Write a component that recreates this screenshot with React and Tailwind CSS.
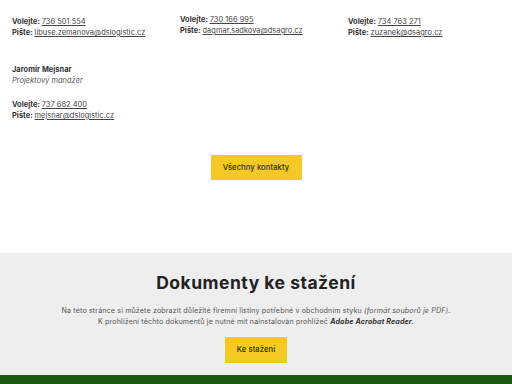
import React from "react";

const font = { fontFamily: "Inter, 'Open Sans', sans-serif" };

function Contact({ phone, email }) {
  return (
    <>
      <div>
        <span className="font-bold">Volejte: </span>
        <a className="underline text-[#444]">{phone}</a>
      </div>
      <div>
        <span className="font-bold">Pište: </span>
        <a className="underline text-[#444]">{email}</a>
      </div>
    </>
  );
}

function Card({ name, title, phone, email, className = "" }) {
  return (
    <div className={"flex flex-col text-[7.4px] leading-[11px] tracking-[0.05px] text-[#333] " + className}>
      {name && <div className="font-bold">{name}</div>}
      {title && <div className="italic text-[#555] mb-[13px]">{title}</div>}
      <Contact phone={phone} email={email} />
    </div>
  );
}

export default function App() {
  return (
    <div className="w-[512px] h-[384px] overflow-hidden bg-white flex flex-col" style={font}>
      <div className="pt-[16px] px-3 grid grid-cols-3 gap-x-4 gap-y-[26px]">
        <Card phone="736 501 554" email="libuse.zemanova@dslogistic.cz" />
        <Card phone="730 166 995" email="dagmar.sadkova@dsagro.cz" className="mt-[-2px]" />
        <Card phone="734 763 271" email="zuzanek@dsagro.cz" />
        <Card name="Jaromír Mejsnar" title="Projektový manažer" phone="737 682 400" email="mejsnar@dslogistic.cz" />
      </div>
      <div className="flex justify-center mt-[34px]">
        <button className="w-[91px] h-[25px] bg-[#f6c823] text-[7.6px] font-medium tracking-[0.1px] text-[#2a2a2a]">Všechny kontakty</button>
      </div>
      <div className="mt-[73px] h-[128px] bg-[#eeeeee] flex flex-col items-center">
        <h2 className="mt-[20px] text-[17.5px] leading-[20px] font-bold tracking-[0.5px] text-[#222]">Dokumenty ke stažení</h2>
        <p className="mt-[12px] text-[7.1px] leading-[11px] tracking-[0.15px] text-[#555] text-center">
          Na této stránce si můžete zobrazit důležité firemní listiny potřebné v obchodním styku <em>(formát souborů je PDF)</em>.
          <br />
          K prohlížení těchto dokumentů je nutné mít nainstalován prohlížeč <strong className="italic font-bold text-[#333]">Adobe Acrobat Reader.</strong>
        </p>
        <button className="mt-[10px] w-[62px] h-[26px] bg-[#f6c823] text-[7.6px] font-medium tracking-[0.1px] text-[#2a2a2a]">Ke stažení</button>
      </div>
      <div className="h-[10px] bg-[#1d5a14]" />
    </div>
  );
}
